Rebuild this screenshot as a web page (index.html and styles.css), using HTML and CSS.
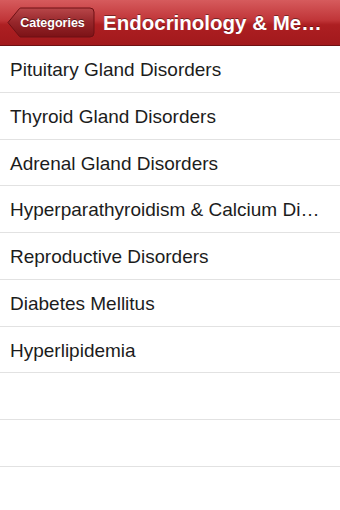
FILE: index.html
```html
<!DOCTYPE html>
<html>
<head>
<meta charset="utf-8">
<link rel="stylesheet" href="styles.css">
</head>
<body>
<div class="nav">
  <div class="back">
    <svg class="back-shape" width="88" height="31" viewBox="0 0 88 31">
      <defs>
        <linearGradient id="bg" x1="0" y1="0" x2="0" y2="1">
          <stop offset="0" stop-color="#b8474a"/>
          <stop offset="0.5" stop-color="#96262a"/>
          <stop offset="1" stop-color="#7c1216"/>
        </linearGradient>
      </defs>
      <path d="M1 15.5 L12.5 1.5 Q13 1 14 1 L83 1 Q87 1 87 5 L87 26 Q87 30 83 30 L14 30 Q13 30 12.5 29.5 Z" fill="url(#bg)" stroke="#6e1014" stroke-width="1"/>
    </svg>
    <span class="back-label">Categories</span>
  </div>
  <div class="title">Endocrinology &amp; Metabolism</div>
</div>
<ul class="list">
  <li class="row">Pituitary Gland Disorders</li>
  <li class="row">Thyroid Gland Disorders</li>
  <li class="row">Adrenal Gland Disorders</li>
  <li class="row">Hyperparathyroidism &amp; Calcium Disorders</li>
  <li class="row">Reproductive Disorders</li>
  <li class="row">Diabetes Mellitus</li>
  <li class="row">Hyperlipidemia</li>
  <li class="row"></li>
  <li class="row"></li>
  <li class="row"></li>
</ul>
</body>
</html>
```
FILE: styles.css
```css
html, body {
  margin: 0;
  padding: 0;
  background: #fff;
  width: 340px;
  height: 510px;
  overflow: hidden;
  font-family: "Liberation Sans", Arial, sans-serif;
}
.nav {
  height: 46px;
  display: flex;
  align-items: center;
  background: linear-gradient(#d65b5d 0%, #c03538 45%, #ad1f22 55%, #a2191c 100%);
  border-bottom: 1px solid #6f1012;
  box-sizing: border-box;
  padding-left: 7px;
  gap: 8px;
}
.back {
  position: relative;
  width: 88px;
  height: 31px;
  flex: none;
  display: flex;
  align-items: center;
  justify-content: center;
}
.back-shape {
  position: absolute;
  left: 0;
  top: 0;
}
.back-label {
  position: relative;
  color: #fff;
  font-weight: bold;
  font-size: 12.5px;
  padding-left: 3px;
  text-shadow: 0 -1px 0 rgba(0,0,0,0.45);
}
.title {
  color: #fff;
  font-weight: bold;
  font-size: 20.5px;
  white-space: nowrap;
  overflow: hidden;
  text-overflow: ellipsis;
  min-width: 0;
  flex: 1;
  padding-right: 14px;
  text-shadow: 0 -1px 0 rgba(0,0,0,0.4);
}
.list {
  list-style: none;
  margin: 0;
  padding: 0;
}
.row {
  height: 46.75px;
  box-sizing: border-box;
  border-bottom: 1.5px solid #e2e2e2;
  padding: 0 14px 0 10px;
  font-size: 19px;
  color: #1c1c1c;
  white-space: nowrap;
  overflow: hidden;
  text-overflow: ellipsis;
  display: block;
  line-height: 47px;
}
```
